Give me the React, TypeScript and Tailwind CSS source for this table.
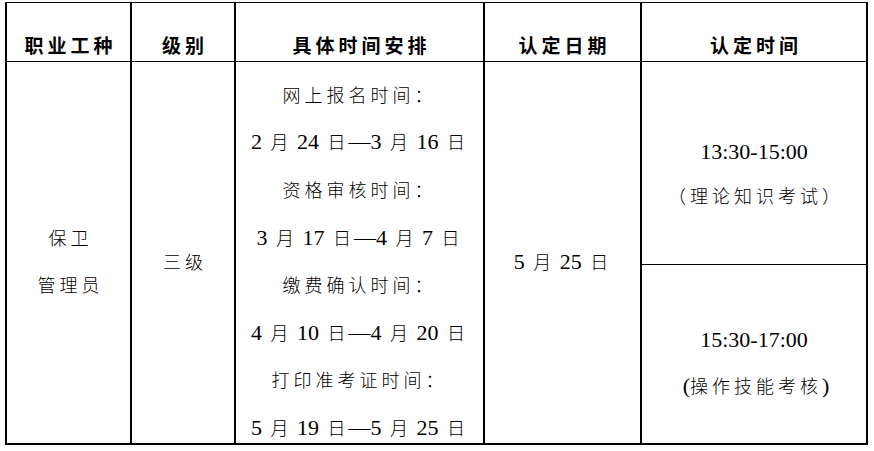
import React from "react";

const CJK = /([\u3000-\u303f\u4e00-\u9fff\uff00-\uffef]+)/;

// mixed line: Chinese runs in the CJK face, digits and dashes in Times-width serif
const T = ({ s }: { s: string }) => (
  <span className="whitespace-nowrap leading-[24px]">
    {s
      .split(CJK)
      .filter(Boolean)
      .map((part, i) =>
        CJK.test(part) ? (
          <span
            key={i}
            className={
              part.length === 1
                ? "px-[3px] font-['Noto_Sans_CJK_SC',sans-serif] text-[18px] font-light"
                : "font-['Noto_Sans_CJK_SC',sans-serif] text-[18px] font-light tracking-[4px]"
            }
          >
            {part}
          </span>
        ) : (
          <span key={i} className="font-['Liberation_Serif',serif] text-[22px]">
            {part}
          </span>
        )
      )}
  </span>
);

// one text row of fixed height, text centred in it
const Line = ({ s, h, className = "" }: { s: string; h: string; className?: string }) => (
  <div className={`flex shrink-0 items-center justify-center ${h} ${className}`}>
    <T s={s} />
  </div>
);

const headers = [
  { label: "职业工种", w: "w-[123px]" },
  { label: "级别", w: "w-[104px] border-l-2" },
  { label: "具体时间安排", w: "w-[249px] border-l-2" },
  { label: "认定日期", w: "w-[157px] border-l-2" },
  { label: "认定时间", w: "w-[226px] border-l-2" },
];

const schedule = [
  "网上报名时间：",
  "2 月 24 日—3 月 16 日",
  "资格审核时间：",
  "3 月 17 日—4 月 7 日",
  "缴费确认时间：",
  "4 月 10 日—4 月 20 日",
  "打印准考证时间：",
  "5 月 19 日—5 月 25 日",
];

const App = () => {
  return (
    <div className="min-h-screen bg-white text-black">
      <div className="pl-[5px] pt-[2px]">
        <div className="w-[863px] border-x-2 border-t border-b-2 border-black">
          {/* Header */}
          <div className="flex h-[59px] border-b border-black">
            {headers.map((h) => (
              <div
                key={h.label}
                className={`${h.w} flex items-end justify-center border-black pb-[4px] pl-[4px] leading-[24px]`}
              >
                <span className="font-['Noto_Sans_CJK_SC',sans-serif] text-[19px] font-bold tracking-[4px]">
                  {h.label}
                </span>
              </div>
            ))}
          </div>

          {/* Body */}
          <div className="flex h-[381px]">
            <div className="flex w-[123px] flex-col pl-[4px] pt-[152px]">
              <Line s="保卫" h="h-[47px]" />
              <Line s="管理员" h="h-[47px]" />
            </div>

            <div className="flex w-[104px] flex-col border-l-2 border-black pl-[4px] pt-[185px]">
              <Line s="三级" h="h-[30px]" />
            </div>

            <div className="flex w-[249px] flex-col overflow-hidden border-l-2 border-black pt-[9px]">
              {schedule.map((line, i) => (
                <Line key={i} s={line} h="h-[47.6px]" />
              ))}
            </div>

            <div className="flex w-[157px] flex-col border-l-2 border-black pt-[185px]">
              <Line s="5 月 25 日" h="h-[30px]" />
            </div>

            <div className="flex w-[226px] flex-col border-l-2 border-black">
              <div className="flex h-[203px] flex-col border-b border-black pt-[68px]">
                <Line s="13:30-15:00" h="h-[44px]" />
                <Line s="（理论知识考试）" h="h-[44px]" className="pl-[4px]" />
              </div>
              <div className="flex flex-1 flex-col pt-[53px]">
                <Line s="15:30-17:00" h="h-[45px]" />
                <Line s="(操作技能考核)" h="h-[45px]" className="pl-[4px]" />
              </div>
            </div>
          </div>
        </div>
      </div>
    </div>
  );
};

export default App;
